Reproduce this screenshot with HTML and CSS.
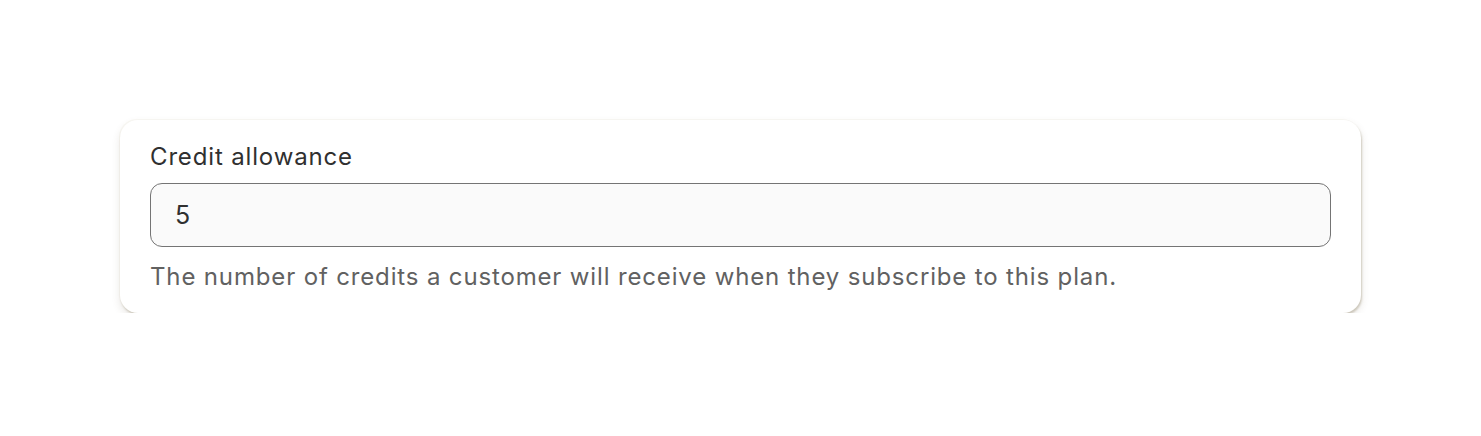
FILE: index.html
```html
<!DOCTYPE html>
<html lang="en">
<head>
<meta charset="utf-8">
<title>Credit allowance</title>
<link rel="stylesheet" href="styles.css">
</head>
<body>
<main class="page">
  <section class="card">
    <label class="label" for="credits">Credit allowance</label>
    <div class="input-wrap">
      <input id="credits" class="input" type="text" value="5">
    </div>
    <p class="help">The number of credits a customer will receive when they subscribe to this plan.</p>
  </section>
</main>
</body>
</html>
```
FILE: styles.css
```css
html, body {
  margin: 0;
  padding: 0;
  background: #ffffff;
}
body {
  font-family: Inter, "Noto Sans", "Liberation Sans", sans-serif;
  color: #303030;
}
.page {
  padding: 120px 120px 0 120px;
}
.card {
  background: #ffffff;
  border-radius: 18px;
  padding: 21px 30px 19px 30px;
  box-shadow:
    -1px -1px 0 rgba(225, 220, 200, 0.18),
    1px 2px 2px rgba(150, 140, 110, 0.38),
    0 4px 8px rgba(90, 80, 60, 0.14);
}
.label {
  display: block;
  font-size: 24px;
  letter-spacing: 0.85px;
  line-height: 32px;
  color: #303030;
  margin-bottom: 10px;
}
.input-wrap {
  display: flex;
}
.input {
  flex: 1;
  height: 64px;
  box-sizing: border-box;
  border: 1px solid #747474;
  border-radius: 12px;
  background: #fafafa;
  padding: 0 24px;
  font-family: inherit;
  font-size: 25px;
  color: #303030;
  outline: none;
}
.help {
  margin: 13px 0 0 0;
  font-size: 24px;
  letter-spacing: 0.85px;
  line-height: 34px;
  color: #616161;
}
```
